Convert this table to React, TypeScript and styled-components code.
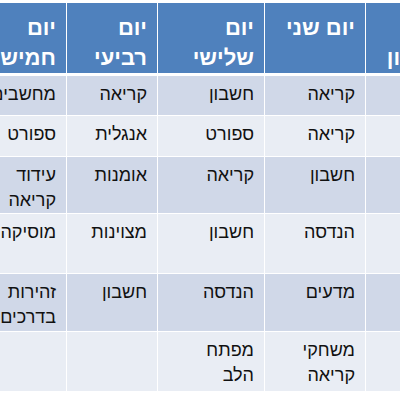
import React from 'react'
import styled, { createGlobalStyle } from 'styled-components'

const GlobalStyle = createGlobalStyle`
  html, body {
    margin: 0;
    padding: 0;
    background: #ffffff;
  }
  body {
    font-family: "Liberation Sans", Arial, "DejaVu Sans", sans-serif;
  }
`

const Viewport = styled.div`
  width: 400px;
  height: 400px;
  overflow: hidden;
  direction: rtl;
  padding-top: 3px;
  box-sizing: border-box;
`

const Table = styled.table`
  table-layout: fixed;
  width: 489px;
  margin-right: -56px;
  border-collapse: collapse;
  direction: rtl;
`

const HeadCell = styled.th`
  background: #4f81bd;
  color: #ffffff;
  font-weight: bold;
  font-size: 22px;
  line-height: 30px;
  text-align: right;
  vertical-align: top;
  padding: 10px 10px 0 10px;
  height: 71px;
  box-sizing: border-box;
  border-left: 1.5px solid #ffffff;
  border-right: 1.5px solid #ffffff;
  border-bottom: 3px solid #ffffff;
`

const Row = styled.tr<{ $odd: boolean; $h: number }>`
  background: ${(p) => (p.$odd ? '#d0d8e8' : '#e9edf4')};
  height: ${(p) => p.$h}px;
`

const Cell = styled.td`
  font-size: 18px;
  line-height: 25px;
  color: #111111;
  text-align: right;
  vertical-align: top;
  padding: 6px 10px 0 10px;
  box-sizing: border-box;
  border: 1.5px solid #ffffff;
`

const Lines = ({ text }: { text: string }) => (
  <>
    {text.split('\n').map((l, i) => (
      <React.Fragment key={i}>
        {i > 0 && <br />}
        {l}
      </React.Fragment>
    ))}
  </>
)

const days = ['יום\nראשון', 'יום שני', 'יום\nשלישי', 'יום\nרביעי', 'יום\nחמישי']
const widths = [90, 101, 107, 91, 100]

const rows: { h: number; cells: string[] }[] = [
  { h: 41, cells: ['', 'קריאה', 'חשבון', 'קריאה', 'מחשבים'] },
  { h: 41, cells: ['', 'קריאה', 'ספורט', 'אנגלית', 'ספורט'] },
  { h: 57, cells: ['', 'חשבון', 'קריאה', 'אומנות', 'עידוד\nקריאה'] },
  { h: 60, cells: ['', 'הנדסה', 'חשבון', 'מצוינות', 'מוסיקה'] },
  { h: 58, cells: ['', 'מדעים', 'הנדסה', 'חשבון', 'זהירות\nבדרכים'] },
  { h: 60, cells: ['', 'משחקי\nקריאה', 'מפתח\nהלב', '', ''] },
]

export default function App(): React.ReactElement {
  return (
    <>
      <GlobalStyle />
      <Viewport>
        <Table>
          <colgroup>
            {widths.map((w, i) => (
              <col key={i} style={{ width: w }} />
            ))}
          </colgroup>
          <thead>
            <tr>
              {days.map((d) => (
                <HeadCell key={d}>
                  <Lines text={d} />
                </HeadCell>
              ))}
            </tr>
          </thead>
          <tbody>
            {rows.map((r, i) => (
              <Row key={i} $odd={i % 2 === 0} $h={r.h}>
                {r.cells.map((c, j) => (
                  <Cell key={j}>
                    <Lines text={c} />
                  </Cell>
                ))}
              </Row>
            ))}
          </tbody>
        </Table>
      </Viewport>
    </>
  )
}
